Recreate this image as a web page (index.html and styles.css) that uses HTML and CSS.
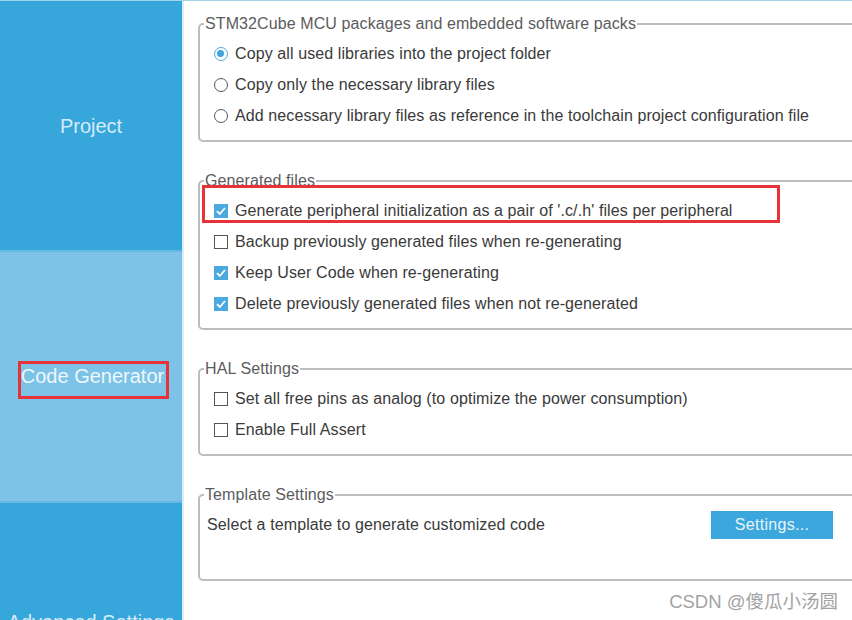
FILE: index.html
```html
<!DOCTYPE html>
<html lang="zh">
<head>
<meta charset="utf-8">
<title>Code Generator</title>
<link rel="stylesheet" href="styles.css">
</head>
<body>
<div class="app">
  <nav class="sidebar">
    <div class="nav-item dark"><span class="nav-label">Project</span></div>
    <div class="nav-sep"></div>
    <div class="nav-item light"><span class="nav-label marked">Code Generator</span></div>
    <div class="nav-sep"></div>
    <div class="nav-item dark last"><span class="nav-label">Advanced Settings</span></div>
  </nav>
  <div class="vsep"></div>
  <main class="content">
    <fieldset class="group">
      <legend>STM32Cube MCU packages and embedded software packs</legend>
      <div class="body">
        <div class="row"><span class="radio on"></span><span>Copy all used libraries into the project folder</span></div>
        <div class="row"><span class="radio"></span><span>Copy only the necessary library files</span></div>
        <div class="row"><span class="radio"></span><span>Add necessary library files as reference in the toolchain project configuration file</span></div>
      </div>
    </fieldset>

    <fieldset class="group">
      <legend>Generated files</legend>
      <div class="body">
        <div class="row highlighted"><span class="check on"><svg viewBox="0 0 14 14" width="14" height="14"><path d="M3 7.2 L5.8 10 L11 4" fill="none" stroke="#fff" stroke-width="1.8"/></svg></span><span>Generate peripheral initialization as a pair of '.c/.h' files per peripheral</span></div>
        <div class="row"><span class="check"></span><span>Backup previously generated files when re-generating</span></div>
        <div class="row"><span class="check on"><svg viewBox="0 0 14 14" width="14" height="14"><path d="M3 7.2 L5.8 10 L11 4" fill="none" stroke="#fff" stroke-width="1.8"/></svg></span><span>Keep User Code when re-generating</span></div>
        <div class="row"><span class="check on"><svg viewBox="0 0 14 14" width="14" height="14"><path d="M3 7.2 L5.8 10 L11 4" fill="none" stroke="#fff" stroke-width="1.8"/></svg></span><span>Delete previously generated files when not re-generated</span></div>
      </div>
    </fieldset>

    <fieldset class="group">
      <legend>HAL Settings</legend>
      <div class="body">
        <div class="row"><span class="check"></span><span>Set all free pins as analog (to optimize the power consumption)</span></div>
        <div class="row"><span class="check"></span><span>Enable Full Assert</span></div>
      </div>
    </fieldset>

    <fieldset class="group">
      <legend>Template Settings</legend>
      <div class="body template">
        <div class="row spread"><span>Select a template to generate customized code</span><button class="btn" type="button">Settings...</button></div>
      </div>
    </fieldset>
  </main>
  <div class="watermark">CSDN @傻瓜小汤圆</div>
</div>
</body>
</html>
```

FILE: styles.css
```css
html, body {
  margin: 0;
  padding: 0;
  background: #ffffff;
}

body {
  font-family: "Liberation Sans", Arial, "Noto Sans CJK SC", sans-serif;
  font-size: 16px;
  color: #3a3a3a;
}

.app {
  position: relative;
  display: flex;
  width: 852px;
  height: 620px;
  overflow: hidden;
  border-top: 1px solid #a6d3ec;
  box-sizing: border-box;
}

/* Sidebar */
.sidebar {
  width: 182px;
  flex: none;
  display: flex;
  flex-direction: column;
}

.nav-item {
  height: 249px;
  flex: none;
  display: flex;
  align-items: center;
  justify-content: center;
  font-size: 20px;
}

.nav-item.last {
  height: 238px;
}

.nav-item.dark {
  background: #37a6da;
  color: #d3ecf9;
}

.nav-item.light {
  background: #7dc3e7;
  color: #eef8fd;
}

.nav-sep {
  height: 2px;
  flex: none;
  background: #66b9e3;
}

.nav-label {
  line-height: 34px;
  white-space: nowrap;
}

.nav-label.marked {
  border: 3px solid #e8323a;
  line-height: 24px;
  padding: 0 2px 8px 0;
  margin: 6px 0 0 5px;
}

.vsep {
  width: 2px;
  flex: none;
  background: #dcedf7;
}

/* Content */
.content {
  flex: 1;
  min-width: 0;
  padding: 14px 0 0 14px;
}

.group {
  margin: 0 -20px 30px 0;
  padding: 0;
  border: 2px solid #bdbdbd;
  border-radius: 5px;
  min-width: 0;
}

.group legend {
  margin-left: 4px;
  padding: 0 1px;
  font-size: 16px;
  line-height: 18px;
  color: #5c5c5c;
  letter-spacing: 0.1px;
}

.body {
  padding: 5px 0 9px 14px;
}

.row {
  position: relative;
  height: 31px;
  display: flex;
  align-items: center;
  gap: 7px;
  white-space: nowrap;
  letter-spacing: 0.1px;
}

.row.highlighted::after {
  content: "";
  position: absolute;
  left: -12px;
  top: -10px;
  width: 578px;
  height: 38px;
  border: 3px solid #e8323a;
  box-sizing: border-box;
}

.radio {
  width: 14px;
  height: 14px;
  flex: none;
  box-sizing: border-box;
  border: 1.5px solid #555;
  border-radius: 50%;
  position: relative;
}

.radio.on {
  border-color: #4aa9de;
}

.radio.on::after {
  content: "";
  position: absolute;
  left: 2px;
  top: 2px;
  width: 7px;
  height: 7px;
  border-radius: 50%;
  background: #3ea4dc;
}

.check {
  width: 14px;
  height: 14px;
  flex: none;
  box-sizing: border-box;
  border: 1.5px solid #555;
  display: flex;
}

.check.on {
  border: none;
  background: #4aa9de;
}

.body.template {
  padding: 5px 37px 39px 7px;
}

.row.spread {
  justify-content: space-between;
}

.btn {
  width: 122px;
  height: 28px;
  border: none;
  background: #3ba7dd;
  color: #e6f4fc;
  font-family: "Liberation Sans", Arial, sans-serif;
  font-size: 16px;
  letter-spacing: 0.3px;
  padding: 0;
}

.watermark {
  position: absolute;
  right: 14px;
  bottom: 7px;
  font-size: 18.5px;
  color: #a3a3a3;
  font-family: "Liberation Sans", Arial, "Noto Sans CJK SC", sans-serif;
  text-shadow: 0 0 2px #fff;
}
```
